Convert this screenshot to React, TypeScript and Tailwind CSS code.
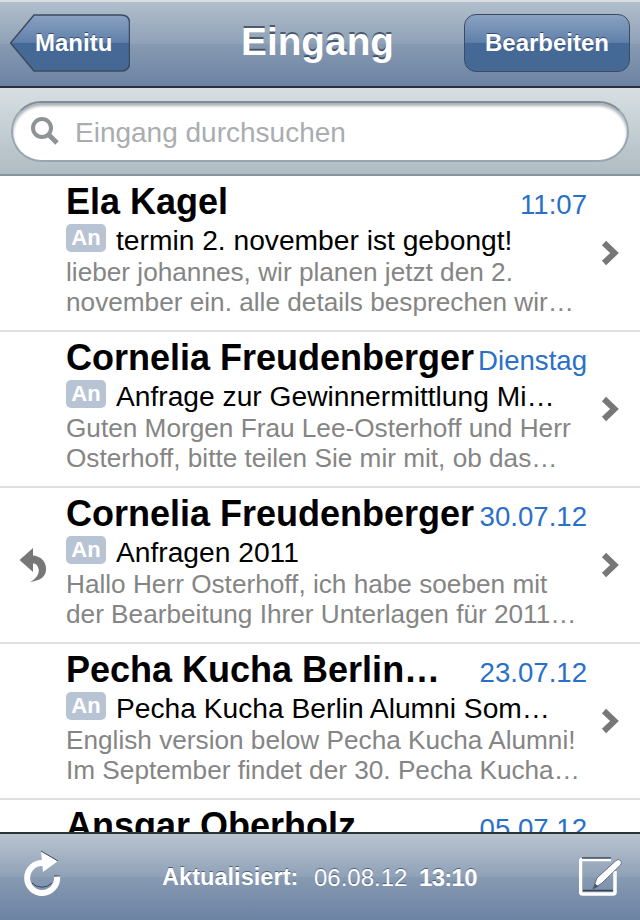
const font = { fontFamily: '"Liberation Sans", Arial, sans-serif' };

const mails = [
  {
    from: "Ela Kagel",
    date: "11:07",
    subject: "termin 2. november ist gebongt!",
    line1: "lieber johannes, wir planen jetzt den 2.",
    line2: "november ein. alle details besprechen wir…",
    replied: false,
  },
  {
    from: "Cornelia Freudenberger",
    date: "Dienstag",
    subject: "Anfrage zur Gewinnermittlung Mi…",
    line1: "Guten Morgen Frau Lee-Osterhoff und Herr",
    line2: "Osterhoff, bitte teilen Sie mir mit, ob das…",
    replied: false,
  },
  {
    from: "Cornelia Freudenberger",
    date: "30.07.12",
    subject: "Anfragen 2011",
    line1: "Hallo Herr Osterhoff, ich habe soeben mit",
    line2: "der Bearbeitung Ihrer Unterlagen für 2011…",
    replied: true,
  },
  {
    from: "Pecha Kucha Berlin…",
    date: "23.07.12",
    subject: "Pecha Kucha Berlin Alumni Som…",
    line1: "English version below Pecha Kucha Alumni!",
    line2: "Im September findet der 30. Pecha Kucha…",
    replied: false,
  },
  {
    from: "Ansgar Oberholz",
    date: "05.07.12",
    subject: "",
    line1: "",
    line2: "",
    replied: false,
  },
];

function ReplyIcon() {
  return (
    <svg width="28" height="36" viewBox="0 0 28 36">
      <path
        d="M0.5 13 L14 1 L14 8.5 C23 9.5 27.5 15.5 27 23 C26.6 29 22.5 33.5 11 35 C17 32 20 27.5 19.8 23 C19 18.5 17 16.5 14 16.5 L14 25 Z"
        fill="#777777"
      />
    </svg>
  );
}

function Chevron() {
  return (
    <svg width="18" height="26" viewBox="0 0 18 26">
      <path d="M3 3 L13.5 13 L3 23" fill="none" stroke="#777777" strokeWidth="6" />
    </svg>
  );
}

function RefreshIcon() {
  return (
    <svg width="38" height="46" viewBox="0 0 38 46">
      <path
        d="M20 13 A15 15 0 1 0 34 26"
        fill="none"
        stroke="#ffffff"
        strokeWidth="6"
      />
      <path d="M18 1 L35 11 L20 22 Z" fill="#ffffff" />
      <path d="M18 1 L35 11" stroke="#3a4656" strokeWidth="1" fill="none" />
      <path d="M31 26 H37" stroke="#3a4656" strokeWidth="1" fill="none" />
      <path d="M9 33 A14 14 0 0 0 29 33" stroke="#3a4656" strokeWidth="1" fill="none" />
    </svg>
  );
}

function ComposeIcon() {
  return (
    <svg width="44" height="40" viewBox="0 0 44 40">
      <path
        d="M32 2.500 H3 Q1.5 2.500 1.5 4.500 V35 Q1.5 37 3.500 37 H34 Q36 37 36 35 V14"
        fill="none"
        stroke="#ffffff"
        strokeWidth="3.500"
      />
      <path d="M3 1 H32" stroke="#3a4656" strokeWidth="1.500" fill="none" />
      <path d="M4 33.500 H34" stroke="#3a4656" strokeWidth="1.500" fill="none" />
      <path
        d="M14 32 L18 21 L37 3.500 Q39.500 1.500 41.500 3.500 Q43.500 5.500 41.500 8 L23 26 Z"
        fill="#ffffff"
        stroke="#4a5668"
        strokeWidth="0.800"
      />
      <path d="M14 32 L16 26.500 L19.500 29.500 Z" fill="#4a5668" />
    </svg>
  );
}

function MailRow({ mail }: { mail: (typeof mails)[number] }) {
  return (
    <div className="flex items-center h-[156px] shrink-0 border-b-2 border-[#e0e0e0] bg-white">
      <div className="w-[66px] shrink-0 flex justify-center pr-[1px]">
        {mail.replied && <ReplyIcon />}
      </div>
      <div className="w-[521px] shrink-0 self-start">
        <div className="flex justify-between items-baseline h-[46px] pt-[5px]">
          <span className="text-[36px] leading-[42px] font-bold text-black whitespace-nowrap">
            {mail.from}
          </span>
          <span className="text-[27.600px] leading-[42px] text-[#2a70c9] whitespace-nowrap">
            {mail.date}
          </span>
        </div>
        <div className="flex items-center h-[36px]">
          <span className="flex items-center justify-center w-[40px] h-[28px] rounded-[5px] bg-[#b8c4d4] text-white text-[22px] font-bold leading-none mr-[10px] mt-[-5px]">
            An
          </span>
          <span className="text-[28.200px] leading-[36px] text-black whitespace-nowrap">
            {mail.subject}
          </span>
        </div>
        <div className="text-[26.200px] leading-[30px] text-[#858585] whitespace-nowrap mt-[-1px]">
          {mail.line1}
        </div>
        <div className="text-[26.200px] leading-[30px] text-[#858585] whitespace-nowrap">
          {mail.line2}
        </div>
      </div>
      <div className="flex-1 flex justify-center pr-[7px]">
        <Chevron />
      </div>
    </div>
  );
}

export default function App() {
  return (
    <div className="flex flex-col w-[640px] h-[920px] overflow-hidden bg-white" style={font}>
      {/* nav bar */}
      <div className="relative flex items-center justify-between h-[88px] shrink-0 px-[10px] pb-[2px] border-t-2 border-b-2 border-t-[#d9dee2] border-b-[#2c3138] bg-[linear-gradient(#b1becc_0%,#8fa1b7_50%,#879ab2_50%,#6c83a3_100%)]">
        <div className="relative w-[120px] h-[58px]">
          <svg className="absolute inset-0" width="120" height="58" viewBox="0 0 120 58">
            <defs>
              <linearGradient id="backFill" x1="0" y1="0" x2="0" y2="1">
                <stop offset="0" stopColor="#8aa2c2" />
                <stop offset="0.5" stopColor="#5f7fa9" />
                <stop offset="0.5" stopColor="#456996" />
                <stop offset="1" stopColor="#456895" />
              </linearGradient>
            </defs>
            <path
              d="M0.500 29 L24 1 H111 Q119.500 1 119.500 9 V49 Q119.500 57 111 57 H24 Z"
              fill="url(#backFill)"
              stroke="#3b4b61"
              strokeWidth="1.500"
            />
          </svg>
          <span className="absolute left-[25px] top-[15px] text-[24px] leading-[28px] font-bold text-white [text-shadow:0_-1px_0_rgba(30,50,80,0.7)]">
            Manitu
          </span>
        </div>
        <div className="absolute left-[241px] top-[17px] text-[38.800px] leading-[46px] font-bold text-white [text-shadow:0_-2px_0_rgba(40,55,75,0.7)]">
          Eingang
        </div>
        <div className="flex items-center justify-center w-[166px] h-[58px] rounded-[12px] border-[1.500px] border-[#3b4b61] text-[24px] font-bold text-white bg-[linear-gradient(#8aa2c2_0%,#5f7fa9_50%,#456996_50%,#456895_100%)] [text-shadow:0_-1px_0_rgba(30,50,80,0.7)]">
          Bearbeiten
        </div>
      </div>

      {/* search */}
      <div className="flex items-center h-[88px] shrink-0 px-[11px] border-b-2 border-[#8795a0] bg-[linear-gradient(#d7dfe2,#b0bcc3)]">
        <div className="flex items-center w-[618px] h-[61px] rounded-full bg-white border-2 border-[#97a6b1] border-t-[#7b8c9a] shadow-[inset_0_3px_3px_rgba(70,80,90,0.45)]">
          <svg className="ml-[17px] shrink-0" width="30" height="30" viewBox="0 0 30 30">
            <circle cx="12" cy="12" r="9" fill="none" stroke="#8e9396" strokeWidth="4" />
            <path d="M18.500 18.500 L27 27" stroke="#8e9396" strokeWidth="5" />
          </svg>
          <span className="ml-[15px] pt-[3px] text-[28px] text-[#a9adb0]">Eingang durchsuchen</span>
        </div>
      </div>

      {/* mail list */}
      <div className="flex-1 overflow-hidden">
        {mails.map((mail, i) => (
          <MailRow key={i} mail={mail} />
        ))}
      </div>

      {/* toolbar */}
      <div className="flex items-center h-[88px] shrink-0 border-t-2 border-[#2c3138] bg-[linear-gradient(#b9c4d0_0%,#8fa1b7_50%,#879ab2_50%,#6c83a3_100%)]">
        <div className="w-[162px] pl-[23px] shrink-0 pb-[8px]">
          <RefreshIcon />
        </div>
        <span className="text-[23.600px] font-bold text-white w-[152px] pt-[1px] whitespace-nowrap [text-shadow:0_-1px_0_rgba(30,50,80,0.6)]">
          Aktualisiert:
        </span>
        <span className="text-[24px] text-white w-[105px] pt-[1px] [text-shadow:0_-1px_0_rgba(30,50,80,0.6)]">
          06.08.12
        </span>
        <span className="text-[24px] tracking-[-0.7px] font-bold text-white pt-[1px] [text-shadow:0_-1px_0_rgba(30,50,80,0.6)]">
          13:10
        </span>
        <div className="ml-auto mr-[17px] pb-[1px]">
          <ComposeIcon />
        </div>
      </div>
    </div>
  );
}
